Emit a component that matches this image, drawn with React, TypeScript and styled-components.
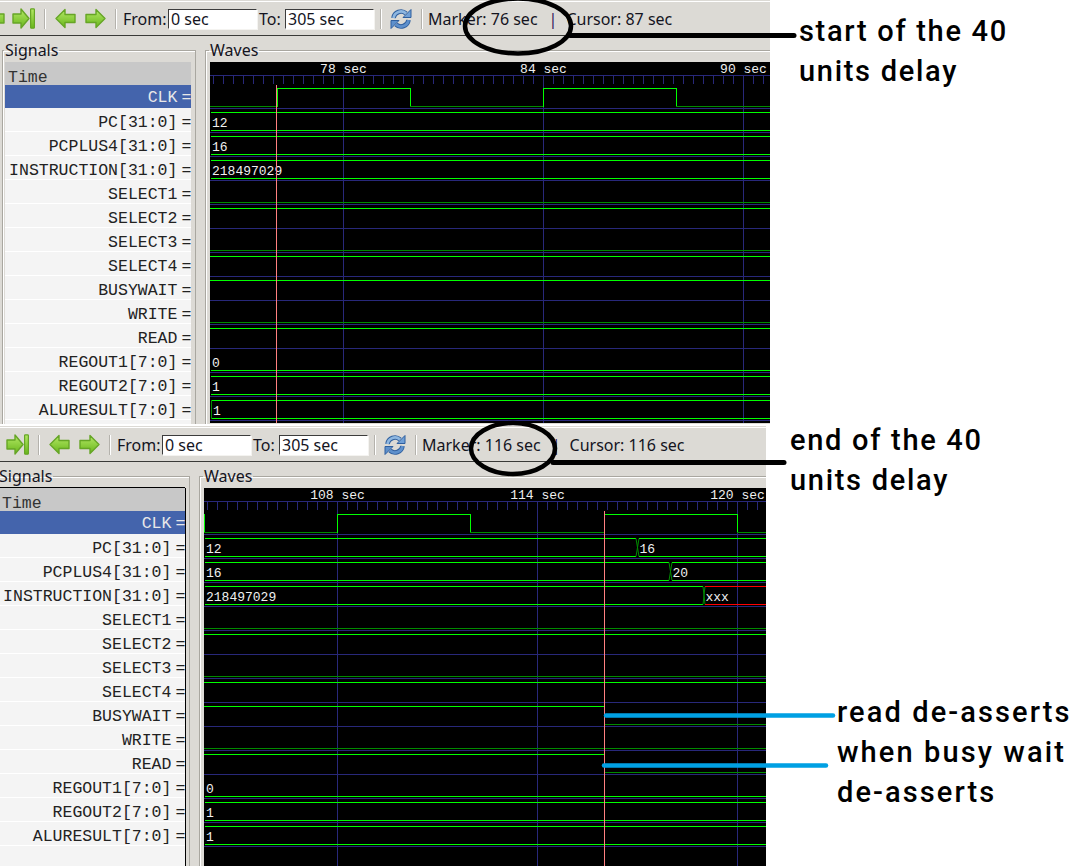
import React from "react";
import styled, { createGlobalStyle } from "styled-components";

const Global = createGlobalStyle`
  html, body { margin: 0; padding: 0; background: #fff; overflow: hidden; }
`;

const MONO = `"Liberation Mono", "Courier New", monospace`;
const UI = `"Noto Sans", "Open Sans", sans-serif`;

const Canvas = styled.div`
  position: relative;
  width: 1082px;
  height: 866px;
  overflow: hidden;
  background: #fff;
  display: flex;
  flex-direction: column;
  align-items: flex-start;
`;

const Win = styled.section<{ $height: number; $width: number; $shift: number; $gap: number }>`
  flex: none;
  width: ${(p) => p.$width}px;
  height: ${(p) => p.$height}px;
  margin-left: ${(p) => p.$shift}px;
  margin-top: ${(p) => p.$gap}px;
  background: #dcdad5;
  overflow: hidden;
  display: flex;
  flex-direction: column;
  padding-top: 1px;
  box-sizing: border-box;
`;

const Toolbar = styled.div`
  flex: none;
  height: 35px;
  box-sizing: border-box;
  border-top: 1px solid #fff;
  border-bottom: 1px solid #3a3a38;
  display: flex;
  align-items: center;
  font: 16px ${UI};
  color: #14141e;
  white-space: nowrap;
`;

const IconSlot = styled.span<{ $lead?: boolean; $ml?: number }>`
  flex: none;
  width: 30px;
  height: 21px;
  display: flex;
  align-items: center;
  justify-content: center;
  margin-left: ${(p) => (p.$lead ? -22 : p.$ml ?? 0)}px;
`;

const Sep = styled.span<{ $ml: number }>`
  flex: none;
  width: 1px;
  height: 20px;
  margin-left: ${(p) => p.$ml}px;
  background: #b4b2ac;
  border-right: 1px solid #fff;
`;

const FieldLabel = styled.span<{ $w: number; $ml: number }>`
  flex: none;
  width: ${(p) => p.$w}px;
  margin-left: ${(p) => p.$ml}px;
`;

const TimeInput = styled.span`
  flex: none;
  width: 89px;
  height: 20px;
  margin-left: 2px;
  box-sizing: border-box;
  padding: 0 2px;
  background: #fff;
  border: 1px solid #fff;
  border-top-color: #3c3c3c;
  border-left-color: #3c3c3c;
  box-shadow: 1px 1px 0 #f4f3f0;
  line-height: 19px;
`;

const Status = styled.span<{ $ml: number }>`
  flex: none;
  margin-left: ${(p) => p.$ml}px;
`;

const Divider = styled.span`
  flex: none;
  margin-left: 11px;
  margin-right: 9px;
  color: #341a5a;
`;

const Body = styled.div`
  flex: 1;
  min-height: 0;
  display: flex;
  padding: 5px 0 0 2px;
`;

const Frame = styled.fieldset`
  margin: 0;
  min-width: 0;
  box-sizing: border-box;
  border: 1px solid #a9a7a0;
  border-bottom: none;
  box-shadow: inset 1px 1px 0 #fff;
  display: flex;
  flex-direction: column;
`;

const SignalsFrame = styled(Frame)`
  flex: none;
  width: 194px;
  padding: 3px 4px 0 2px;
`;

const WavesFrame = styled(Frame)`
  flex: none;
  width: 600px;
  margin-left: 9px;
  padding: 3px 0 0 4px;
`;

const Legend = styled.legend`
  padding: 0 1px;
  margin-left: -1px;
  font: 16px/18px ${UI};
  color: #14141e;
`;

const SignalList = styled.div<{ $focused: boolean }>`
  flex: 1;
  min-height: 0;
  background: #f4f4f4;
  box-shadow: ${(p) => (p.$focused ? "0 -1px 0 #000, 1px 0 0 #000, -1px 0 0 #000" : "none")};
  font: 16.5px ${MONO};
  color: #222;
`;

const TimeHead = styled.div`
  height: 23px;
  box-sizing: border-box;
  padding: 8px 0 0 3px;
  line-height: 15px;
  background: #c8c8c8;
  color: #333;
`;

const Signal = styled.div<{ $selected?: boolean }>`
  box-sizing: border-box;
  display: flex;
  justify-content: flex-end;
  align-items: center;
  white-space: pre;
  padding-top: ${(p) => (p.$selected ? 3 : 6)}px;
  background: ${(p) => (p.$selected ? "#4464ac" : "#f4f4f4")};
  color: ${(p) => (p.$selected ? "#e8e8e8" : "#222")};
  border-bottom: 1px solid ${(p) => (p.$selected ? "#4464ac" : "#fff")};
  height: ${(p) => (p.$selected ? 23 : 24)}px;
`;

const Equals = styled.span`
  margin-left: 4px;
  width: 9.6px;
`;

const WaveBox = styled.svg`
  display: block;
  flex: none;
  background: #000;
`;

const WaveText = styled.text`
  font: 13px ${MONO};
  fill: #f0f0f0;
`;

const Notes = styled.svg`
  position: absolute;
  left: 0;
  top: 0;
  pointer-events: none;
`;

const Note = styled.div<{ $x: number; $y: number; $ls: number }>`
  position: absolute;
  left: ${(p) => p.$x}px;
  top: ${(p) => p.$y}px;
  font: 500 29px/40px Roboto, "Noto Sans", sans-serif;
  letter-spacing: ${(p) => p.$ls}px;
  color: #000;
  white-space: nowrap;
`;

/* Icons */
const Grad = ({ id }: { id: string }) => (
  <defs>
    <linearGradient id={id} x1="0" y1="0" x2="0" y2="1">
      <stop offset="0" stopColor="#b4e866" />
      <stop offset="1" stopColor="#68b61a" />
    </linearGradient>
  </defs>
);

const ArrowIcon = ({ flip }: { flip?: boolean }) => {
  const id = flip ? "arrL" : "arrR";
  return (
    <svg width="21" height="21" viewBox="0 0 21 21">
      <Grad id={id} />
      <g transform={flip ? "translate(21 0) scale(-1 1)" : undefined}>
        <path
          d="M1 6.5H11V1.5L20 10.5L11 19.5V14.5H1Z"
          fill={`url(#${id})`}
          stroke="#66a526"
          strokeWidth="1.4"
          strokeLinejoin="round"
        />
      </g>
    </svg>
  );
};

const EdgeIcon = ({ flip }: { flip?: boolean }) => {
  const id = flip ? "edgeL" : "edgeR";
  return (
    <svg width="23" height="21" viewBox="0 0 23 21">
      <Grad id={id} />
      <g transform={flip ? "translate(23 0) scale(-1 1)" : undefined}>
        <path
          d="M1 6H9V1L17 10.5L9 20V15H1Z"
          fill={`url(#${id})`}
          stroke="#66a526"
          strokeWidth="1.4"
          strokeLinejoin="round"
        />
        <rect x="18.6" y="0.8" width="3.8" height="19.4" rx="0.8" fill={`url(#${id})`} stroke="#66a526" strokeWidth="1.2" />
      </g>
    </svg>
  );
};

const RefreshIcon = () => (
  <svg width="22" height="22" viewBox="0 0 22 22">
    <g fill="none" strokeLinecap="butt">
      <path d="M3.5 10A7.5 7.5 0 0 1 16 5.5" stroke="#2f5f9e" strokeWidth="4.6" />
      <path d="M18.5 12A7.5 7.5 0 0 1 6 16.5" stroke="#2f5f9e" strokeWidth="4.6" />
      <path d="M3.5 10A7.5 7.5 0 0 1 16 5.5" stroke="#8db6e0" strokeWidth="2.8" />
      <path d="M18.5 12A7.5 7.5 0 0 1 6 16.5" stroke="#5e90cc" strokeWidth="2.8" />
    </g>
    <path d="M13 9.5H21V1.5Z" fill="#6f9fd6" stroke="#2f5f9e" />
    <path d="M9 12.5H1V20.5Z" fill="#5e90cc" stroke="#2f5f9e" />
  </svg>
);

/* Wave data */
type Bit = { t: "bit"; start: 0 | 1; at: number[] };
type BusSeg = { from: number; to: number; label: string; bad?: boolean };
type Bus = { t: "bus"; zero?: boolean; dark?: boolean; segs: BusSeg[] };
type Track = Bit | Bus;

const BRIGHT = "#00ff00";
const DIM = "#008a00";
const GRID = "#28287a";
const RED = "#ff0000";
const CURSOR = "#ff8080";

const END = 570;
const hi = (r: number) => 26 + 24 * r;
const lo = (r: number) => 44 + 24 * r;

const HLine = ({ x1, x2, y, fill }: { x1: number; x2: number; y: number; fill: string }) => (
  <rect x={x1} y={y} width={Math.max(0, x2 - x1)} height={1} fill={fill} />
);

const VLine = ({ x, y1, y2, fill }: { x: number; y1: number; y2: number; fill: string }) => (
  <rect x={x} y={y1} width={1} height={Math.max(0, y2 - y1)} fill={fill} />
);

const BitTrack = ({ row, track }: { row: number; track: Bit }) => {
  const parts: React.ReactNode[] = [];
  const xs = [0, ...track.at, END];
  let level = track.start;
  for (let i = 0; i < xs.length - 1; i++) {
    const a = xs[i];
    const b = xs[i + 1];
    if (b > a) {
      parts.push(<HLine key={`h${i}`} x1={a} x2={b + 1} y={level ? hi(row) : lo(row)} fill={level ? BRIGHT : DIM} />);
    }
    if (i < xs.length - 2) {
      parts.push(<VLine key={`v${i}`} x={b} y1={hi(row)} y2={lo(row) + 1} fill={BRIGHT} />);
    }
    level = level ? 0 : 1;
  }
  return <g>{parts}</g>;
};

const BusTrack = ({ row, track }: { row: number; track: Bus }) => (
  <g>
    {track.dark && <VLine x={1} y1={hi(row)} y2={lo(row) + 1} fill={DIM} />}
    {track.segs.map((s, i) => {
      const colour = s.bad ? RED : BRIGHT;
      const next = track.segs[i + 1];
      return (
        <g key={s.from}>
          {!track.zero && <HLine x1={s.from} x2={s.to} y={hi(row)} fill={colour} />}
          <HLine x1={s.from} x2={s.to} y={lo(row)} fill={colour} />
          {next && (
            <g>
              <line x1={s.to} x2={next.from} y1={hi(row) + 0.5} y2={lo(row) + 0.5} stroke={DIM} />
              <line x1={s.to} x2={next.from} y1={lo(row) + 0.5} y2={hi(row) + 0.5} stroke={DIM} />
            </g>
          )}
          <WaveText x={s.from + (i === 0 ? 1 : 0.5)} y={41 + 24 * row}>
            {s.label}
          </WaveText>
        </g>
      );
    })}
  </g>
);

const Waveform = ({
  width,
  height,
  cursor,
  times,
  tracks,
}: {
  width: number;
  height: number;
  cursor: number;
  times: string[];
  tracks: Track[];
}) => {
  const majors = [133, 333, 533];
  const ticks: number[] = [];
  for (let x = 3; x < width; x += 10) ticks.push(x);
  return (
    <WaveBox width={width} height={height} viewBox={`0 0 ${width} ${height}`}>
      <HLine x1={0} x2={width} y={13} fill={GRID} />
      {ticks.map((x) => (
        <VLine key={x} x={x} y1={14} y2={22} fill={GRID} />
      ))}
      {majors.map((x) => (
        <VLine key={x} x={x} y1={13} y2={height} fill={GRID} />
      ))}
      {tracks.map((_, r) => (
        <HLine key={r} x1={0} x2={width} y={46 + 24 * r} fill={GRID} />
      ))}
      {majors.map((x, i) => (
        <WaveText key={x} x={x + 0.5} y={11} textAnchor="middle">
          {times[i]}
        </WaveText>
      ))}
      {tracks.map((t, r) =>
        t.t === "bit" ? <BitTrack key={r} row={r} track={t} /> : <BusTrack key={r} row={r} track={t} />
      )}
      <VLine x={cursor} y1={23} y2={height} fill={CURSOR} />
    </WaveBox>
  );
};

const SIGNALS = [
  "PC[31:0]",
  "PCPLUS4[31:0]",
  "INSTRUCTION[31:0]",
  "SELECT1",
  "SELECT2",
  "SELECT3",
  "SELECT4",
  "BUSYWAIT",
  "WRITE",
  "READ",
  "REGOUT1[7:0]",
  "REGOUT2[7:0]",
  "ALURESULT[7:0]",
];

const bus = (label: string): Bus => ({ t: "bus", segs: [{ from: 1, to: END, label }] });
const low: Bit = { t: "bit", start: 0, at: [] };
const high: Bit = { t: "bit", start: 1, at: [] };
const tail: Track[] = [
  { t: "bus", zero: true, segs: [{ from: 1, to: END, label: "0" }] },
  bus("1"),
];

const TRACKS_A: Track[] = [
  { t: "bit", start: 0, at: [67, 200, 333, 466] },
  bus("12"),
  bus("16"),
  bus("218497029"),
  low,
  high,
  low,
  high,
  high,
  low,
  high,
  ...tail,
  { t: "bus", dark: true, segs: [{ from: 2, to: END, label: "1" }] },
];

const TRACKS_B: Track[] = [
  { t: "bit", start: 1, at: [0, 133, 266, 400, 533] },
  {
    t: "bus",
    segs: [
      { from: 1, to: 432, label: "12" },
      { from: 435, to: END, label: "16" },
    ],
  },
  {
    t: "bus",
    segs: [
      { from: 1, to: 465, label: "16" },
      { from: 468, to: END, label: "20" },
    ],
  },
  {
    t: "bus",
    segs: [
      { from: 1, to: 499, label: "218497029" },
      { from: 501, to: END, label: "xxx", bad: true },
    ],
  },
  low,
  high,
  low,
  high,
  { t: "bit", start: 1, at: [400] },
  low,
  { t: "bit", start: 1, at: [400] },
  ...tail,
  bus("1"),
];

const WaveWindow = ({
  height,
  width,
  shift,
  gap,
  marker,
  cursorText,
  focused,
  waveWidth,
  waveHeight,
  cursor,
  times,
  tracks,
}: {
  height: number;
  width: number;
  shift: number;
  gap: number;
  marker: string;
  cursorText: string;
  focused: boolean;
  waveWidth: number;
  waveHeight: number;
  cursor: number;
  times: string[];
  tracks: Track[];
}) => (
  <Win $height={height} $width={width} $shift={shift} $gap={gap}>
    <Toolbar>
      <IconSlot $lead>
        <EdgeIcon flip />
      </IconSlot>
      <IconSlot>
        <EdgeIcon />
      </IconSlot>
      <Sep $ml={6} />
      <IconSlot $ml={4}>
        <ArrowIcon flip />
      </IconSlot>
      <IconSlot>
        <ArrowIcon />
      </IconSlot>
      <Sep $ml={5} />
      <FieldLabel $w={43} $ml={6}>From:</FieldLabel>
      <TimeInput>0 sec</TimeInput>
      <FieldLabel $w={24} $ml={2}>To:</FieldLabel>
      <TimeInput>305 sec</TimeInput>
      <Sep $ml={6} />
      <IconSlot $ml={4}>
        <RefreshIcon />
      </IconSlot>
      <Sep $ml={5} />
      <Status $ml={5}>Marker: {marker}</Status>
      <Divider>|</Divider>
      <Status $ml={0}>Cursor: {cursorText}</Status>
    </Toolbar>
    <Body>
      <SignalsFrame>
        <Legend>Signals</Legend>
        <SignalList $focused={focused}>
          <TimeHead>Time</TimeHead>
          <Signal $selected>
            CLK<Equals>=</Equals>
          </Signal>
          {SIGNALS.map((s) => (
            <Signal key={s}>
              {s}
              <Equals>=</Equals>
            </Signal>
          ))}
        </SignalList>
      </SignalsFrame>
      <WavesFrame>
        <Legend>Waves</Legend>
        <Waveform width={waveWidth} height={waveHeight} cursor={cursor} times={times} tracks={tracks} />
      </WavesFrame>
    </Body>
  </Win>
);

export default function App() {
  return (
    <Canvas>
      <Global />
      <WaveWindow
        height={424}
        width={770}
        shift={0}
        gap={0}
        marker="76 sec"
        cursorText="87 sec"
        focused={false}
        waveWidth={560}
        waveHeight={361}
        cursor={66}
        times={["78 sec", "84 sec", "90 sec"]}
        tracks={TRACKS_A}
      />
      <WaveWindow
        height={440}
        width={772}
        shift={-6}
        gap={2}
        marker="116 sec"
        cursorText="116 sec"
        focused
        waveWidth={562}
        waveHeight={378}
        cursor={400}
        times={["108 sec", "114 sec", "120 sec"]}
        tracks={TRACKS_B}
      />
      <Notes width={1082} height={866} viewBox="0 0 1082 866">
        <g fill="none" stroke="#000" strokeWidth="4.5">
          <ellipse cx="518" cy="26" rx="53" ry="27.5" />
          <ellipse cx="513" cy="448.5" rx="42" ry="25.5" />
        </g>
        <g stroke="#000" strokeWidth="5" strokeLinecap="round">
          <line x1="570" y1="35.5" x2="794" y2="35.5" />
          <line x1="553" y1="462.5" x2="784" y2="462.5" />
        </g>
        <g stroke="#00a0e3" strokeWidth="4.5" strokeLinecap="round">
          <line x1="606" y1="715.5" x2="833" y2="715.5" />
          <line x1="604" y1="765.5" x2="826" y2="765.5" />
        </g>
      </Notes>
      <Note $x={799} $y={11} $ls={1.7}>
        start of the 40
        <br />
        units delay
      </Note>
      <Note $x={790} $y={420} $ls={1.7}>
        end of the 40
        <br />
        units delay
      </Note>
      <Note $x={837} $y={692} $ls={2.1}>
        read de-asserts
        <br />
        when busy wait
        <br />
        de-asserts
      </Note>
    </Canvas>
  );
}
